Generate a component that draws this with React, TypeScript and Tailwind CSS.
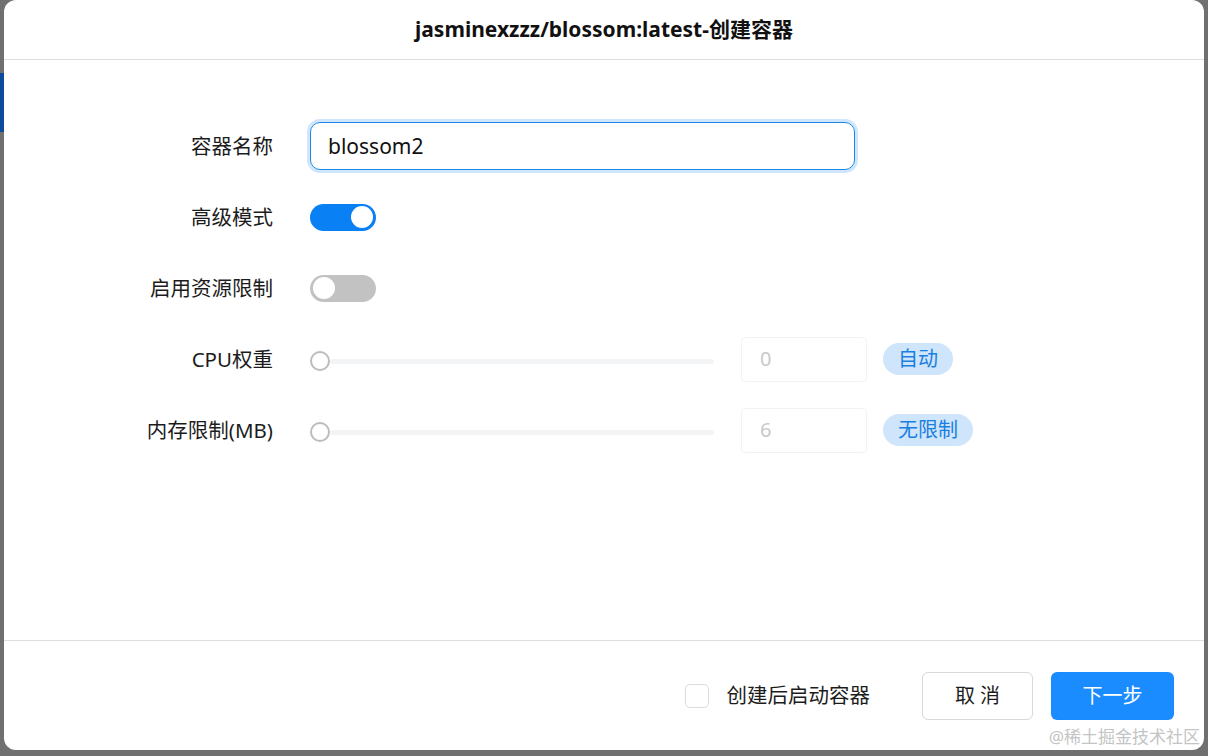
import { useState } from "react"

const font = "font-['Noto_Sans','Noto_Sans_CJK_SC',sans-serif]"

function Toggle({ on }: { on: boolean }) {
  return (
    <div
      className={`relative h-[27px] w-[66px] rounded-full ${on ? "bg-[#0a80f5]" : "bg-[#c2c2c2]"}`}
    >
      <div
        className={`absolute top-[2.5px] h-[22px] w-[22px] rounded-full bg-white ${on ? "right-[3px]" : "left-[3px]"}`}
      />
    </div>
  )
}

function SliderRow({ value, tag }: { value: string; tag: string }) {
  return (
    <div className="flex items-center">
      <div className="mt-[4px] flex w-[404px] items-center">
        <div className="h-[20px] w-[20px] shrink-0 rounded-full border-[2.5px] border-[#bcbcbc] bg-white" />
        <div className="h-[5px] flex-1 rounded-full bg-[#f3f4f6]" />
      </div>
      <div className="ml-[27px] flex h-[45px] w-[126px] items-center rounded-[4px] border border-[#f3f3f3] pl-[18px] text-[20px] text-[#c9c9c9]">
        {value}
      </div>
      <span className="ml-[16px] rounded-full bg-[#cfe5fb] px-[15px] py-[1px] text-[20px] text-[#1a7fe0]">
        {tag}
      </span>
    </div>
  )
}

function Row({ label, children }: { label: string; children: React.ReactNode }) {
  return (
    <div className="flex h-[48px] items-center">
      <div className="w-[269px] text-right text-[20.5px] text-[#1c1c1c]">{label}</div>
      <div className="ml-[37px] flex items-center">{children}</div>
    </div>
  )
}

export default function App() {
  const [name, setName] = useState("blossom2")
  const [startAfter, setStartAfter] = useState(false)

  return (
    <div className={`relative h-[756px] w-[1208px] overflow-hidden bg-[#707070] ${font}`}>
      {/* background app strip on the left */}
      <div className="absolute left-0 top-[73px] h-[59px] w-[4px] bg-[#0d4c9c]" />

      <div className="mx-[4px] flex h-[750px] w-[1200px] flex-col rounded-[12px] bg-white">
        <div className="flex h-[60px] shrink-0 items-center justify-center border-b border-[#dedede]">
          <h1 className="text-[21px] font-bold text-[#111]">jasminexzzz/blossom:latest-创建容器</h1>
        </div>

        <div className="flex flex-1 flex-col gap-[23px] pt-[62px]">
          <Row label="容器名称">
            <input
              value={name}
              onChange={(e) => setName(e.target.value)}
              className="h-[48px] w-[545px] rounded-[10px] border border-[#1b87e6] px-[17px] text-[21px] text-[#111] outline-none ring-[3px] ring-[#cfe6fc]"
            />
          </Row>
          <Row label="高级模式">
            <Toggle on />
          </Row>
          <Row label="启用资源限制">
            <Toggle on={false} />
          </Row>
          <Row label="CPU权重">
            <SliderRow value="0" tag="自动" />
          </Row>
          <Row label="内存限制(MB)">
            <SliderRow value="6" tag="无限制" />
          </Row>
        </div>

        <div className="relative flex h-[110px] shrink-0 items-center justify-end border-t border-[#dedede] pr-[30px]">
          <label className="flex cursor-pointer items-center">
            <button
              onClick={() => setStartAfter(!startAfter)}
              className={`h-[24px] w-[24px] rounded-[5px] border ${startAfter ? "border-[#1890ff] bg-[#1890ff]" : "border-[#dcdcdc] bg-white"}`}
            />
            <span className="ml-[18px] text-[20.5px] text-[#1c1c1c]">创建后启动容器</span>
          </label>
          <button className="ml-[52px] h-[48px] w-[111px] rounded-[6px] border border-[#d9d9d9] bg-white text-[20px] text-[#1c1c1c]">
            取 消
          </button>
          <button className="ml-[18px] h-[48px] w-[123px] rounded-[6px] bg-[#1a8cff] text-[20px] text-white">
            下一步
          </button>
          <span className="absolute bottom-[1px] right-[4px] text-[17px] text-[#c4c4c4]">@稀土掘金技术社区</span>
        </div>
      </div>
    </div>
  )
}
